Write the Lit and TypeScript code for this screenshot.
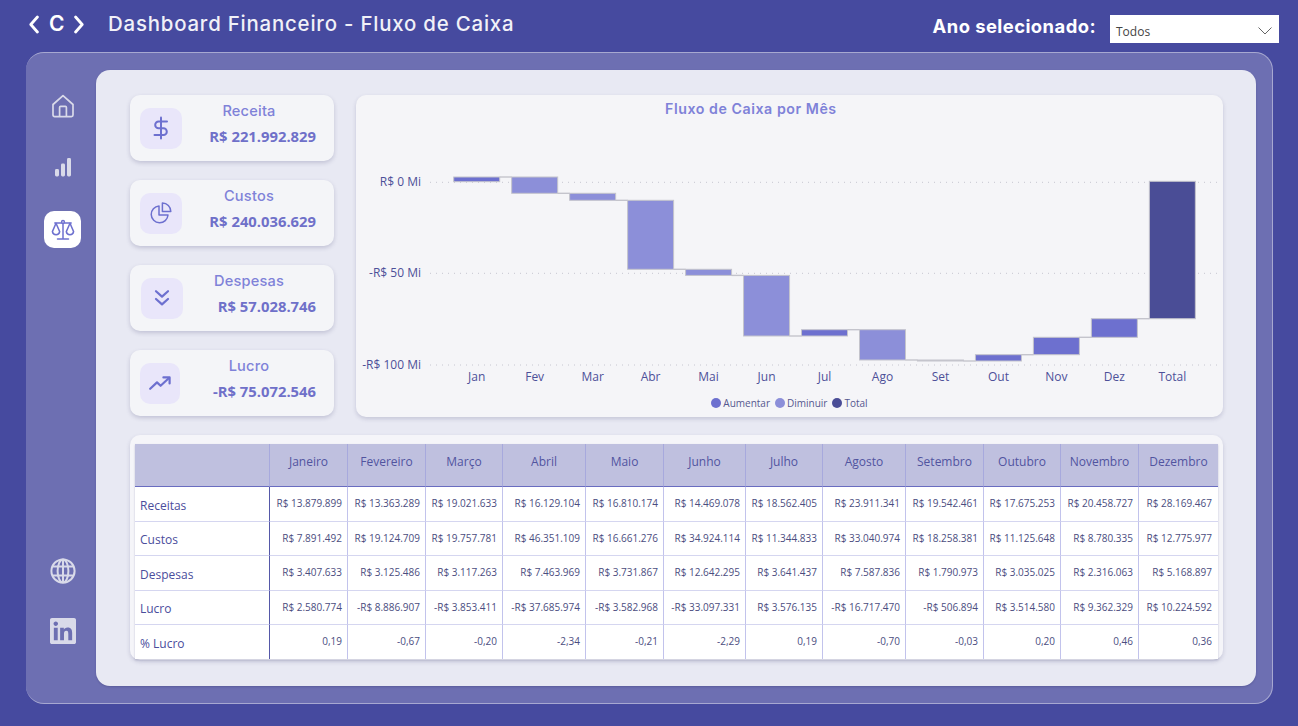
import { LitElement, html, css, svg } from "lit";
import { customElement } from "lit/decorators.js";

type BarKind = "up" | "down" | "total";
interface Bar { label: string; top: number; bottom: number; kind: BarKind; level: number; }

const BARS: Bar[] = [
  { label: "Jan", top: 177, bottom: 181.7, kind: "up", level: 177 },
  { label: "Fev", top: 177, bottom: 193.3, kind: "down", level: 193.3 },
  { label: "Mar", top: 193.3, bottom: 200.3, kind: "down", level: 200.3 },
  { label: "Abr", top: 200.3, bottom: 269.3, kind: "down", level: 269.3 },
  { label: "Mai", top: 269.3, bottom: 275.4, kind: "down", level: 275.4 },
  { label: "Jun", top: 275.4, bottom: 336, kind: "down", level: 336 },
  { label: "Jul", top: 329.7, bottom: 336, kind: "up", level: 329.7 },
  { label: "Ago", top: 329.7, bottom: 360, kind: "down", level: 360 },
  { label: "Set", top: 360, bottom: 361, kind: "down", level: 361 },
  { label: "Out", top: 354.7, bottom: 361, kind: "up", level: 354.7 },
  { label: "Nov", top: 337.3, bottom: 354.7, kind: "up", level: 337.3 },
  { label: "Dez", top: 318.7, bottom: 337.3, kind: "up", level: 318.7 },
  { label: "Total", top: 181.3, bottom: 318.7, kind: "total", level: 318.7 },
];

const MONTHS = ["Janeiro", "Fevereiro", "Março", "Abril", "Maio", "Junho", "Julho", "Agosto", "Setembro", "Outubro", "Novembro", "Dezembro"];

const ROWS: { name: string; values: string[] }[] = [
  { name: "Receitas", values: ["R$ 13.879.899", "R$ 13.363.289", "R$ 19.021.633", "R$ 16.129.104", "R$ 16.810.174", "R$ 14.469.078", "R$ 18.562.405", "R$ 23.911.341", "R$ 19.542.461", "R$ 17.675.253", "R$ 20.458.727", "R$ 28.169.467"] },
  { name: "Custos", values: ["R$ 7.891.492", "R$ 19.124.709", "R$ 19.757.781", "R$ 46.351.109", "R$ 16.661.276", "R$ 34.924.114", "R$ 11.344.833", "R$ 33.040.974", "R$ 18.258.381", "R$ 11.125.648", "R$ 8.780.335", "R$ 12.775.977"] },
  { name: "Despesas", values: ["R$ 3.407.633", "R$ 3.125.486", "R$ 3.117.263", "R$ 7.463.969", "R$ 3.731.867", "R$ 12.642.295", "R$ 3.641.437", "R$ 7.587.836", "R$ 1.790.973", "R$ 3.035.025", "R$ 2.316.063", "R$ 5.168.897"] },
  { name: "Lucro", values: ["R$ 2.580.774", "-R$ 8.886.907", "-R$ 3.853.411", "-R$ 37.685.974", "-R$ 3.582.968", "-R$ 33.097.331", "R$ 3.576.135", "-R$ 16.717.470", "-R$ 506.894", "R$ 3.514.580", "R$ 9.362.329", "R$ 10.224.592"] },
  { name: "% Lucro", values: ["0,19", "-0,67", "-0,20", "-2,34", "-0,21", "-2,29", "0,19", "-0,70", "-0,03", "0,20", "0,46", "0,36"] },
];

const chevronLeft = html`<svg width="10" height="19" viewBox="0 0 10 19"><path d="M8.4 2 L1.8 9.5 L8.4 17" fill="none" stroke="#fff" stroke-width="2.8" stroke-linecap="round" stroke-linejoin="round"/></svg>`;
const chevronRight = html`<svg width="10" height="19" viewBox="0 0 10 19"><path d="M1.6 2 L8.2 9.5 L1.6 17" fill="none" stroke="#fff" stroke-width="2.8" stroke-linecap="round" stroke-linejoin="round"/></svg>`;

const homeIcon = html`<svg width="24" height="24" viewBox="0 0 24 24" fill="none" stroke="currentColor" stroke-width="1.7" stroke-linejoin="round"><path d="M2 10.5 L12 1.6 L22 10.5 V21 a1.6 1.6 0 0 1-1.6 1.6 H3.6 A1.6 1.6 0 0 1 2 21 Z"/><path d="M8.6 22.5 V13.4 a1 1 0 0 1 1-1 h4.8 a1 1 0 0 1 1 1 V22.5"/></svg>`;
const barsIcon = html`<svg width="18" height="20" viewBox="0 0 18 20" fill="currentColor"><rect x="1" y="12" width="4" height="7.5" rx="1.4"/><rect x="7" y="6.5" width="4" height="13" rx="1.4"/><rect x="13" y="1" width="4" height="18.5" rx="1.4"/></svg>`;
const scaleIcon = html`<svg width="24" height="24" viewBox="0 0 24 24" fill="none" stroke="#6d70cf" stroke-width="1.5" stroke-linecap="round" stroke-linejoin="round"><circle cx="12" cy="4" r="1.4"/><path d="M12 5.4 V20.4 M6.5 21 H17.5 M3.8 5 H10.6 M13.4 5 H20.2"/><path d="M5 5.2 L1.4 13.6 a3.7 3.7 0 0 0 7.3 0 Z"/><path d="M19 5.2 L15.3 13.6 a3.7 3.7 0 0 0 7.3 0 Z"/></svg>`;
const globeIcon = html`<svg width="26" height="26" viewBox="0 0 26 26" fill="none" stroke="currentColor" stroke-width="2"><circle cx="13" cy="13" r="11.6"/><ellipse cx="13" cy="13" rx="5.4" ry="11.6"/><path d="M13 1.4 V24.6 M2.6 8.4 H23.4 M2.6 17.6 H23.4"/></svg>`;
const linkedinIcon = html`<svg width="26" height="26" viewBox="0 0 24 24" fill="currentColor"><path d="M20.447 20.452h-3.554v-5.569c0-1.328-.027-3.037-1.852-3.037-1.853 0-2.136 1.445-2.136 2.939v5.667H9.351V9h3.414v1.561h.046c.477-.9 1.637-1.85 3.37-1.85 3.601 0 4.267 2.37 4.267 5.455v6.286zM5.337 7.433c-1.144 0-2.063-.926-2.063-2.065 0-1.138.92-2.063 2.063-2.063 1.14 0 2.064.925 2.064 2.063 0 1.139-.925 2.065-2.064 2.065zm1.782 13.019H3.555V9h3.564v11.452zM22.225 0H1.771C.792 0 0 .774 0 1.729v20.542C0 23.227.792 24 1.771 24h20.451C23.2 24 24 23.227 24 22.271V1.729C24 .774 23.2 0 22.222 0h.003z"/></svg>`;

const dollarIcon = html`<svg width="18" height="24" viewBox="0 0 18 24" fill="none" stroke="#6d70cf" stroke-width="2" stroke-linecap="round" stroke-linejoin="round"><path d="M9 1.5 V22.5"/><path d="M15 5.5 H6.6 a3.4 3.4 0 0 0 0 6.8 h4.8 a3.4 3.4 0 0 1 0 6.8 H2.5"/></svg>`;
const pieIcon = html`<svg width="22" height="22" viewBox="0 0 22 22" fill="none" stroke="#6d70cf" stroke-width="1.5" stroke-linejoin="round"><path d="M9 4 a8.4 8.4 0 1 0 9 9 H9 Z"/><path d="M12.4 1 a8.4 8.4 0 0 1 8.4 8.4 H12.4 Z"/></svg>`;
const doubleDownIcon = html`<svg width="16" height="18" viewBox="0 0 16 18" fill="none" stroke="#6d70cf" stroke-width="2.2" stroke-linecap="round" stroke-linejoin="round"><path d="M2 2.2 L8 7.6 L14 2.2"/><path d="M2 10 L8 15.4 L14 10"/></svg>`;
const trendIcon = html`<svg width="22" height="14" viewBox="0 0 22 14" fill="none" stroke="#6d70cf" stroke-width="2.2" stroke-linecap="round" stroke-linejoin="round"><path d="M1.2 12.8 L8 6.4 L11.6 9.8 L20 2"/><path d="M14.4 1.4 H20.6 V7.4"/></svg>`;

const KPIS = [
  { label: "Receita", value: "R$ 221.992.829", icon: dollarIcon, cls: "" },
  { label: "Custos", value: "R$ 240.036.629", icon: pieIcon, cls: "" },
  { label: "Despesas", value: "R$ 57.028.746", icon: doubleDownIcon, cls: "shifted" },
  { label: "Lucro", value: "-R$ 75.072.546", icon: trendIcon, cls: "narrow" },
];

@customElement("cash-flow-chart")
export class CashFlowChart extends LitElement {
  static styles = css`
    :host {
      display: flex;
      flex-direction: column;
      height: 100%;
      background: #f5f5f8;
      border-radius: 10px;
      box-shadow: 0 2px 4px rgba(60, 60, 110, 0.2);
      font-family: "Open Sans", sans-serif;
    }
    .title {
      height: 32px;
      padding: 5px 0 0 309px;
      box-sizing: border-box;
      font: 600 14.2px/17px Inter, sans-serif;
      letter-spacing: 0.55px;
      color: #7f82d8;
    }
    svg { display: block; }
    .axis { font-size: 12px; fill: #4d5099; }
    .legend {
      display: flex;
      justify-content: center;
      align-items: center;
      gap: 5px;
      height: 26px;
      padding-bottom: 2px;
      box-sizing: border-box;
      font-size: 10px;
      color: #55588f;
    }
    .entry { display: flex; align-items: center; gap: 2px; }
    .dot { width: 10px; height: 10px; border-radius: 50%; }
    .up { background: #6d70cf; }
    .down { background: #8c8fd9; }
    .total { background: #4a4d96; }
  `;

  render() {
    const fills: Record<BarKind, string> = { up: "#6d70cf", down: "#8c8fd9", total: "#4a4d96" };
    const x = (i: number) => 453.7 + i * 57.97;
    return html`
      <div class="title">Fluxo de Caixa por Mês</div>
      <svg width="867" height="264" viewBox="356 127 867 264">
        ${[[182.3, "R$ 0 Mi"], [273.3, "-R$ 50 Mi"], [365, "-R$ 100 Mi"]].map(([y, t]) => svg`
          <line x1="430" x2="1217" y1=${y} y2=${y} stroke="#c6c6d0" stroke-width="1" stroke-dasharray="1 5"></line>
          <text class="axis" x="421" y=${(y as number) + 4} text-anchor="end">${t}</text>`)}
        ${BARS.map((b, i) => svg`
          ${i < BARS.length - 1
            ? svg`<line x1=${x(i) + 46} x2=${x(i + 1)} y1=${b.level} y2=${b.level} stroke="#c4c4cc" stroke-width="1.4"></line>`
            : ""}
          <rect x=${x(i)} y=${b.top} width="46" height=${b.bottom - b.top} fill=${fills[b.kind]} stroke="#c4c4cc" stroke-width="1"></rect>
          <text class="axis" x=${x(i) + 23} y="381" text-anchor="middle">${b.label}</text>`)}
      </svg>
      <div class="legend">
        <span class="entry"><span class="dot up"></span>Aumentar</span>
        <span class="entry"><span class="dot down"></span>Diminuir</span>
        <span class="entry"><span class="dot total"></span>Total</span>
      </div>
    `;
  }
}

@customElement("app-root")
export class AppRoot extends LitElement {
  static styles = css`
    :host {
      display: block;
      width: 1298px;
      height: 726px;
      overflow: hidden;
      background: #464a9f;
      font-family: "Open Sans", sans-serif;
    }
    .header {
      display: flex;
      align-items: center;
      height: 52px;
      padding: 0 19px 4px 29px;
      box-sizing: border-box;
      color: #fff;
    }
    .logo { display: flex; align-items: center; gap: 10px; width: 79px; }
    .logo b { font: 600 21px/22px Inter, sans-serif; }
    .app-title { font: 500 20.4px/26px Inter, sans-serif; letter-spacing: 0.8px; color: #f1f1f8; flex: 1; }
    .year-label { font: 700 18.4px/24px Inter, sans-serif; letter-spacing: 0.45px; margin: 4px 14px 0 0; }
    .select {
      display: flex;
      align-items: center;
      justify-content: space-between;
      width: 169px;
      height: 28px;
      margin-top: 10px;
      padding: 4px 7px 0 6px;
      box-sizing: border-box;
      background: #fff;
      font-size: 12px;
      color: #444;
    }
    .panel {
      display: flex;
      width: 1247px;
      height: 652px;
      margin-left: 26px;
      padding: 17px 16px 17px 70px;
      box-sizing: border-box;
      background: #6d6fb2;
      border: 1px solid rgba(255, 255, 255, 0.4);
      border-left: 0;
      border-radius: 18px;
      position: relative;
    }
    .nav {
      position: absolute;
      left: 18px;
      top: 0;
      bottom: 0;
      width: 37px;
      display: flex;
      flex-direction: column;
      align-items: center;
      padding: 34px 0 54px;
      box-sizing: border-box;
      color: #d9dae9;
    }
    .nav-item {
      display: flex;
      align-items: center;
      justify-content: center;
      width: 37px;
      height: 37px;
      margin-bottom: 24px;
    }
    .nav-item.active { background: #fff; border-radius: 10px; margin-top: 2px; }
    .spacer { flex: 1; }
    .nav-foot { margin: 0; height: 36px; }
    .nav-foot + .nav-foot { margin-top: 24px; }
    .inner {
      flex: 1;
      display: flex;
      flex-direction: column;
      gap: 18px;
      padding: 25px 33px 26px 34px;
      background: #e8e9f3;
      border-radius: 14px;
      box-shadow: 0 1px 2px rgba(40, 40, 90, 0.25);
    }
    .top { display: grid; grid-template-columns: 204px 867px; gap: 22px; height: 322px; }
    .kpis { display: flex; flex-direction: column; gap: 19px; }
    .kpi {
      display: flex;
      align-items: center;
      height: 66px;
      padding: 0 18px 0 10px;
      box-sizing: border-box;
      background: #f4f5f8;
      border-radius: 10px;
      box-shadow: 0 2px 4px rgba(60, 60, 110, 0.22);
    }
    .tile {
      display: flex;
      align-items: center;
      justify-content: center;
      flex: none;
      width: 42px;
      height: 41px;
      border-radius: 10px;
      background: #e9e6fa;
    }
    .kpi.shifted .tile { margin-left: 1px; margin-right: -1px; }
    .kpi.narrow .tile { width: 40px; margin-right: 2px; }
    .kpi-text { flex: 1; display: flex; flex-direction: column; margin-top: -8px; }
    .kpi-label { font: 500 14.6px/18px Inter, sans-serif; letter-spacing: 0.2px; color: #7f82d8; text-align: center; }
    .kpi-value { font-size: 14.8px; font-weight: 700; line-height: 20px; margin-top: 6px; color: #6f70c9; text-align: right; }
    .table-card {
      height: 225px;
      padding: 9px 5px 0;
      box-sizing: border-box;
      background: #f5f5f9;
      border-radius: 10px;
      box-shadow: 0 2px 4px rgba(60, 60, 110, 0.2);
    }
    .table {
      display: grid;
      grid-template-columns: 135px 78px 78px 77px 83px 78px 82px 77px 83px 78px 77px 78px 79px;
      grid-template-rows: 43px 35px 34px 35px 34px 34px;
      background: #fff;
      color: #4a4d98;
      box-shadow: 0 1px 2px rgba(60, 60, 110, 0.25);
    }
    .cell {
      display: flex;
      align-items: center;
      justify-content: flex-end;
      padding: 0 5px 2px 0;
      box-sizing: border-box;
      font-size: 10px;
      color: #4b4d80;
      border-right: 1px solid #c2c3ec;
      border-bottom: 1px solid #d5d6f0;
      white-space: nowrap;
    }
    .cell:nth-child(13n) { border-right: 0; padding-right: 6px; }
    .head {
      justify-content: center;
      padding: 0 0 8px;
      background: #bfc0df;
      font-size: 12px;
      color: #51549f;
      border-right-color: #a7a9dd;
      border-bottom-color: #696cc0;
    }
    .cell.head:nth-child(13n) { padding-right: 0; }
    .name {
      justify-content: flex-start;
      padding: 2px 0 0 5px;
      font-size: 12px;
      color: #4a4d9c;
      border-right-color: #5558a8;
    }
    .head.name { background: #bfc0df; border-right-color: #a7a9dd; border-bottom-color: #696cc0; }
    .last { border-bottom: 0; }
  `;

  render() {
    return html`
      <div class="header">
        <div class="logo">${chevronLeft}<b>C</b>${chevronRight}</div>
        <div class="app-title">Dashboard Financeiro - Fluxo de Caixa</div>
        <div class="year-label">Ano selecionado:</div>
        <div class="select">
          <span>Todos</span>
          <svg width="14" height="8" viewBox="0 0 14 8"><path d="M0.5 0.5 L7 7 L13.5 0.5" fill="none" stroke="#666" stroke-width="1"/></svg>
        </div>
      </div>
      <div class="panel">
        <div class="nav">
          <div class="nav-item">${homeIcon}</div>
          <div class="nav-item">${barsIcon}</div>
          <div class="nav-item active">${scaleIcon}</div>
          <div class="spacer"></div>
          <div class="nav-item nav-foot">${globeIcon}</div>
          <div class="nav-item nav-foot">${linkedinIcon}</div>
        </div>
        <div class="inner">
          <div class="top">
            <div class="kpis">
              ${KPIS.map((k) => html`
                <div class="kpi ${k.cls}">
                  <div class="tile">${k.icon}</div>
                  <div class="kpi-text">
                    <div class="kpi-label">${k.label}</div>
                    <div class="kpi-value">${k.value}</div>
                  </div>
                </div>`)}
            </div>
            <cash-flow-chart></cash-flow-chart>
          </div>
          <div class="table-card">
            <div class="table">
              <div class="cell head name"></div>
              ${MONTHS.map((m) => html`<div class="cell head">${m}</div>`)}
              ${ROWS.map((r, i) => {
                const last = i === ROWS.length - 1 ? "last" : "";
                return html`
                  <div class="cell name ${last}">${r.name}</div>
                  ${r.values.map((v) => html`<div class="cell ${last}">${v}</div>`)}`;
              })}
            </div>
          </div>
        </div>
      </div>
    `;
  }
}
